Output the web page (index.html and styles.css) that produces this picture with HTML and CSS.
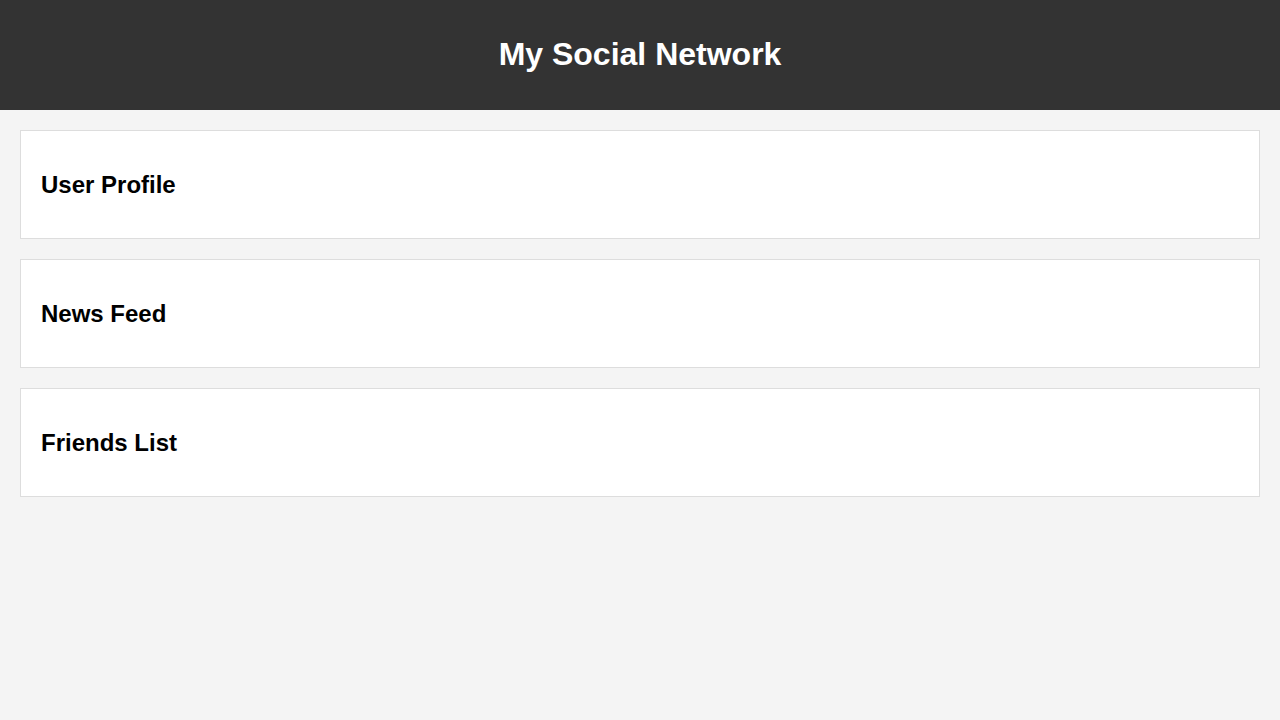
FILE: index.html
```html
<!DOCTYPE html>
<html>
<head>
<meta charset="utf-8">
<title>My Social Network</title>
<link rel="stylesheet" href="styles.css">
</head>
<body>
<header class="site-header">
  <h1 class="site-title">My Social Network</h1>
</header>
<main class="content">
  <section class="card"><h2 class="card-title">User Profile</h2></section>
  <section class="card"><h2 class="card-title">News Feed</h2></section>
  <section class="card"><h2 class="card-title">Friends List</h2></section>
</main>
</body>
</html>
```
FILE: styles.css
```css
body {
  margin: 0;
  font-family: "Liberation Sans", Arial, sans-serif;
  background: #f4f4f4;
  color: #000;
}
.site-header {
  background: #333;
  color: #fff;
  padding: 15px 20px;
  text-align: center;
}
.site-title {
  font-size: 32px;
  margin: 21.44px 0;
}
.content {
  padding: 20px;
}
.card {
  background: #fff;
  border: 1px solid #ddd;
  padding: 20px;
  margin-bottom: 20px;
}
.card-title {
  font-size: 24px;
  line-height: 27.3px;
  margin: 19.92px 0;
}
```
